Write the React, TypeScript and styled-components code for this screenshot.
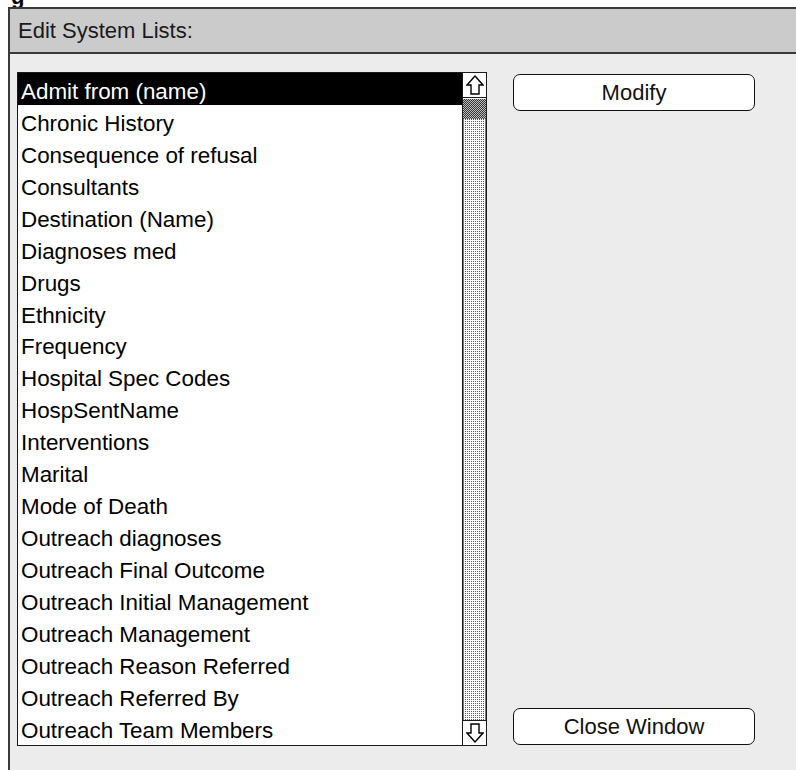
import React from "react";
import styled, { createGlobalStyle } from "styled-components";

const GlobalStyle = createGlobalStyle`
  html, body {
    margin: 0;
    padding: 0;
    background: #ffffff;
    font-family: "Liberation Sans", Arial, sans-serif;
    color: #000;
  }
`;

const Page = styled.div`
  width: 796px;
  height: 770px;
  overflow: hidden;
  padding-left: 8px;
  box-sizing: border-box;
`;

const PageTitle = styled.div`
  height: 7px;
  overflow: hidden;
  font-size: 22px;
  font-weight: bold;
  line-height: 22px;
  padding-left: 3px;
  & > span {
    display: block;
    margin-top: -14px;
  }
`;

const Frame = styled.div`
  width: 830px;
  height: 800px;
  border-top: 2px solid #3a3a3a;
  border-left: 2px solid #3a3a3a;
  background: #ececec;
`;

const Header = styled.div`
  height: 43px;
  background: #cbcbcb;
  border-bottom: 2px solid #3a3a3a;
  display: flex;
  align-items: center;
  padding-left: 8px;
  font-size: 22px;
  color: #1a1a1a;
`;

const Body = styled.div`
  display: flex;
  padding: 18px 0 0 7px;
  gap: 26px;
`;

const ListBox = styled.div`
  width: 468px;
  height: 672px;
  border: 1px solid #1a1a1a;
  background: #fff;
  display: flex;
`;

const Items = styled.ul`
  flex: 1;
  margin: 0;
  padding: 0;
  list-style: none;
  overflow: hidden;
`;

const Row = styled.li<{ $selected?: boolean }>`
  height: 31.95px;
  display: flex;
  align-items: center;
  padding: 6px 0 0 3px;
  box-sizing: border-box;
  font-size: 22.4px;
  white-space: nowrap;
  background: ${(p) => (p.$selected ? "#000" : "#fff")};
  color: ${(p) => (p.$selected ? "#fff" : "#000")};
`;

const ScrollBar = styled.div`
  width: 23px;
  border-left: 1px solid #1a1a1a;
  display: flex;
  flex-direction: column;
`;

const ArrowBox = styled.div<{ $down?: boolean }>`
  height: 24px;
  background: #fff;
  display: flex;
  align-items: center;
  justify-content: center;
  ${(p) => (p.$down ? "border-top: 1px solid #1a1a1a;" : "border-bottom: 1px solid #1a1a1a;")}
`;

const Thumb = styled.div`
  height: 20px;
  margin-top: 1px;
  background-color: #7a7a7a;
  background-image: repeating-conic-gradient(#333333 0 25%, #bdbdbd 0 50%);
  background-size: 2px 2px;
`;

const Track = styled.div`
  flex: 1;
  background-color: #fff;
  background-image: conic-gradient(#5a5a5a 25%, #ffffff 0);
  background-size: 2px 2px;
  border-left: 1px solid #7a7a7a;
  border-right: 1px solid #7a7a7a;
`;

const Side = styled.div`
  width: 242px;
  display: flex;
  flex-direction: column;
  justify-content: space-between;
  padding: 2px 0 1px;
`;

const Button = styled.button`
  height: 37px;
  width: 242px;
  border: 1.5px solid #111;
  border-radius: 7px;
  background: #fff;
  font-family: "Liberation Sans", Arial, sans-serif;
  font-size: 22px;
  color: #111;
  padding: 0;
  cursor: pointer;
`;

const UpArrow = () => (
  <svg width="18" height="20" viewBox="0 0 18 20">
    <polygon
      points="9,1 17,10 13,10 13,19 5,19 5,10 1,10"
      fill="#fff"
      stroke="#000"
      strokeWidth="1.4"
      strokeLinejoin="miter"
    />
  </svg>
);

const DownArrow = () => (
  <svg width="18" height="20" viewBox="0 0 18 20">
    <polygon
      points="9,19 17,10 13,10 13,1 5,1 5,10 1,10"
      fill="#fff"
      stroke="#000"
      strokeWidth="1.4"
      strokeLinejoin="miter"
    />
  </svg>
);

const lists = [
  "Admit from (name)",
  "Chronic History",
  "Consequence of refusal",
  "Consultants",
  "Destination (Name)",
  "Diagnoses med",
  "Drugs",
  "Ethnicity",
  "Frequency",
  "Hospital Spec Codes",
  "HospSentName",
  "Interventions",
  "Marital",
  "Mode of Death",
  "Outreach diagnoses",
  "Outreach Final Outcome",
  "Outreach Initial Management",
  "Outreach Management",
  "Outreach Reason Referred",
  "Outreach Referred By",
  "Outreach Team Members",
];

export default function App() {
  const [selected, setSelected] = React.useState(0);
  return (
    <>
      <GlobalStyle />
      <Page>
        <PageTitle>
          <span>g</span>
        </PageTitle>
        <Frame>
          <Header>Edit System Lists:</Header>
          <Body>
            <ListBox>
              <Items>
                {lists.map((name, i) => (
                  <Row key={name} $selected={i === selected} onClick={() => setSelected(i)}>
                    {name}
                  </Row>
                ))}
              </Items>
              <ScrollBar>
                <ArrowBox>
                  <UpArrow />
                </ArrowBox>
                <Thumb />
                <Track />
                <ArrowBox $down>
                  <DownArrow />
                </ArrowBox>
              </ScrollBar>
            </ListBox>
            <Side>
              <Button>Modify</Button>
              <Button>Close Window</Button>
            </Side>
          </Body>
        </Frame>
      </Page>
    </>
  );
}
